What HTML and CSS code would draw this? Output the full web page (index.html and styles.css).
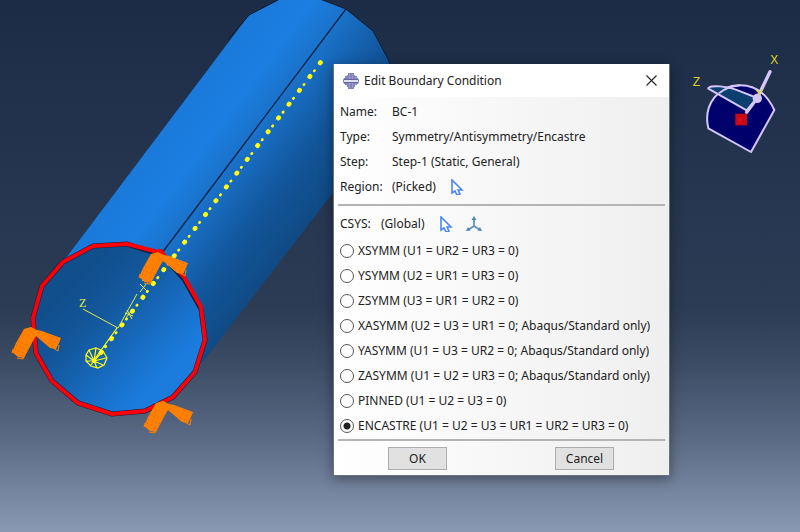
FILE: index.html
```html
<!DOCTYPE html>
<html lang="en">
<head>
    <title>Edit Boundary Condition</title>
    <meta charset="UTF-8">
    <meta name="viewport" content="width=device-width, initial-scale=1">
    <link rel="stylesheet" href="styles.css">
</head>
<body>
    <main class="viewport">
        <svg class="model" viewBox="0 0 800 532" preserveAspectRatio="xMinYMin slice" aria-hidden="true">
            <defs>
                <linearGradient id="side" gradientUnits="userSpaceOnUse" x1="63" y1="262" x2="202" y2="366">
                    <stop offset="0" stop-color="#1a7adb"/>
                    <stop offset=".25" stop-color="#1b7ee0"/>
                    <stop offset=".42" stop-color="#1a73cc"/>
                    <stop offset=".75" stop-color="#12559a"/>
                    <stop offset="1" stop-color="#104a84"/>
                </linearGradient>
                <linearGradient id="face" gradientUnits="userSpaceOnUse" x1="70" y1="285" x2="165" y2="375">
                    <stop offset="0" stop-color="#114e8c"/>
                    <stop offset=".3" stop-color="#13569a"/>
                    <stop offset=".8" stop-color="#1972cc"/>
                    <stop offset="1" stop-color="#1b7cde"/>
                </linearGradient>
                <!-- fixed support marker, one per constrained vertex -->
                <g id="support">
                    <path d="M151 254L158 252 164 255 169 256 188 263 186 268 183 274 177 273 163 261 160 266 151 283 145 282 139 277 143 268z" fill="#ff8000"/>
                    <path d="M143 270l12 5M142 274l11 5M145 266l11 5M180 261l-5 8M184 263l-5 9" fill="none" stroke="#b5652c" stroke-width="1" stroke-dasharray="1 3"/>
                    <path d="M139 278l1-4M144 283l6 1 2-5M180 273l5 3 1-6" fill="none" stroke="#ff8000" stroke-width="1"/>
                </g>
            </defs>

            <path d="M63 262L249 15 278 0 320-1 346 9 373 31 389 61 398 108 202 363 112 330z" fill="url(#side)"/>
            <path d="M228 40l21-25 29-15M320-1l26 10 27 22 16 30 9 47" fill="none" stroke="#0b1c30" stroke-width="1"/>
            <path d="M162 253L346 9" stroke="#0a2444" stroke-width="1.3"/>
            <path d="M93 246l34-2 35 11 22 24 17 30 4 31-10 32-22 25-28 14-33 3-34-11-26-22-16-28-3-35 9-32 21-24z" fill="url(#face)" stroke="#0b2342" stroke-width="5"/>
            <path d="M93 246l34-2 35 9 22 24 17 30 4 33-10 32-22 25-28 14-33 3-34-11-26-22-16-28-3-35 9-32 21-24z" fill="none" stroke="#fb0008" stroke-width="4" stroke-linejoin="round"/>
            <circle cx="160" cy="253" r="4" fill="#fb0008"/>

            <g fill="none" stroke="#ffff14" stroke-linecap="round">
                <path d="M320.500 62.500L100 354" stroke-width="4.600" stroke-dasharray=".6 16.700"/>
                <path d="M314.600 70.500L100 354" stroke-width="2.600" stroke-dasharray=".6 16.700"/>
                <path d="M117 328L94 360" stroke-width="1.200"/>
            </g>
            <g fill="none" stroke="#e2ec3e" stroke-width="1">
                <path d="M83 309l35 19 19-34"/>
                <path d="M127 310l5 9M132 310l-6 8M125 313l8 3" />
                <path d="M140 284l7 7M147 283l-7 9M142 280l6 2"/>
            </g>
            <g fill="none" stroke="#ffff14" stroke-width="1.200">
                <path d="M96 348l7 3 4 7-3 7-6 3-7-2-5-5v-6l3-5z"/>
                <path d="M94 361l2-13M94 361l9-10M94 361l12-3M94 361l9 4M94 361l3 7M94 361l-4 5M94 361l-8 0M94 361l-8-6M94 361l-5-11"/>
            </g>
            <circle cx="94" cy="361" r="2" fill="#ffff14"/>
            <text class="axis-label" x="79" y="307">Z</text>

            <use href="#support"/>
            <use href="#support" x="-127" y="75"/>
            <use href="#support" x="5" y="149"/>
        </svg>

        <svg class="triad" viewBox="0 0 390 390" aria-hidden="true">
            <path d="M115 265C98 192 148 135 210 136c47 0 82 28 103 74l-70 126z" fill="#00006c" stroke="#d6c6fa" stroke-width="6" stroke-linejoin="round"/>
            <path d="M230 211L115 146c0-14 62-7 96 8l51 20z" fill="#0b3f70" stroke="#d6c6fa" stroke-width="6" stroke-linejoin="round"/>
            <path d="M147 160c18-15 40-22 63-24" fill="none" stroke="#d6c6fa" stroke-width="6"/>
            <path d="M300 95l-38 79-32 43" fill="none" stroke="#d6c6fa" stroke-width="10" stroke-linecap="round"/>
            <circle cx="262" cy="175" r="14" fill="#d6c6fa"/>
            <path d="M258 150l10 9 9-11M268 159v8" fill="none" stroke="#e6d72c" stroke-width="4"/>
            <path d="M196 221h35v35h-35z" fill="#cc0812"/>
            <path d="M206 237l5 8 5-8z" fill="none" stroke="#f0202a" stroke-width="2"/>
            <text class="triad-label" x="301" y="73">X</text>
            <text class="triad-label" x="68" y="138">Z</text>
        </svg>

        <form class="dialog" role="dialog" aria-labelledby="dialog-title">
            <header class="titlebar">
                <svg class="app-icon" viewBox="0 0 16 16" aria-hidden="true">
                    <path d="M5 0h6v2h1v1h2v2h1l1 2v2l-1 2h-1v1h-2v2h-1v2H5v-2H4v-2H2v-1H1L0 9V7l1-2h1V3h2V2h1z" fill="#8384ba"/>
                    <path d="M6.500 1v5M9.500 1v5M12.500 4v2M6.500 10v5M9.500 10v5M12.500 10v2" stroke="#9c9ccc" stroke-width="1"/>
                    <path d="M1 6.500h14M1 9.500h14" stroke="#6263a0" stroke-width="1"/>
                    <path d="M1 8h14" stroke="#fff" stroke-width="1.500"/>
                </svg>
                <h1 class="title" id="dialog-title">Edit Boundary Condition</h1>
                <button class="close" type="button" aria-label="Close">
                    <svg viewBox="0 0 11 11" aria-hidden="true"><path d="M.5.5l10 10M10.500.5l-10 10" stroke="#222" stroke-width="1.100"/></svg>
                </button>
            </header>

            <div class="body">
                <div class="row"><span class="label">Name:</span><span>BC-1</span></div>
                <div class="row"><span class="label">Type:</span><span>Symmetry/Antisymmetry/Encastre</span></div>
                <div class="row"><span class="label">Step:</span><span>Step-1 (Static, General)</span></div>
                <div class="row">
                    <span class="label">Region:</span><span>(Picked)</span>
                    <button class="tool" type="button" aria-label="Edit region">
                        <svg viewBox="0 0 16 16" aria-hidden="true"><path d="M3 1v13l3-2 2 4 3-1-2-4h4z" fill="#fff" stroke="#4a86f7" stroke-width="1.600"/></svg>
                    </button>
                </div>
                <hr class="rule">
                <div class="row">
                    <span class="label label-csys">CSYS:</span><span>(Global)</span>
                    <button class="tool" type="button" aria-label="Edit CSYS">
                        <svg viewBox="0 0 16 16" aria-hidden="true"><path d="M3 1v13l3-2 2 4 3-1-2-4h4z" fill="#fff" stroke="#4a86f7" stroke-width="1.600"/></svg>
                    </button>
                    <button class="tool tool-csys" type="button" aria-label="Create datum CSYS">
                        <svg viewBox="0 0 16 16" aria-hidden="true"><path d="M8 2v8l-6 4M8 10l6 4" fill="none" stroke="#5b93bd" stroke-width="1.800"/><path d="M8 0l2.500 4h-5zM0 15l2-4 2.500 3.500zM16 15l-2-4-2.500 3.500z" fill="#4b87b4"/></svg>
                    </button>
                </div>
                <div class="options">
                    <label class="row option"><input type="radio" name="bc">XSYMM (U1 = UR2 = UR3 = 0)</label>
                    <label class="row option"><input type="radio" name="bc">YSYMM (U2 = UR1 = UR3 = 0)</label>
                    <label class="row option"><input type="radio" name="bc">ZSYMM (U3 = UR1 = UR2 = 0)</label>
                    <label class="row option"><input type="radio" name="bc">XASYMM (U2 = U3 = UR1 = 0; Abaqus/Standard only)</label>
                    <label class="row option"><input type="radio" name="bc">YASYMM (U1 = U3 = UR2 = 0; Abaqus/Standard only)</label>
                    <label class="row option"><input type="radio" name="bc">ZASYMM (U1 = U2 = UR3 = 0; Abaqus/Standard only)</label>
                    <label class="row option"><input type="radio" name="bc">PINNED (U1 = U2 = U3 = 0)</label>
                    <label class="row option"><input type="radio" name="bc" checked>ENCASTRE (U1 = U2 = U3 = UR1 = UR2 = UR3 = 0)</label>
                </div>
                <footer class="actions">
                    <button class="btn" type="button">OK</button>
                    <button class="btn" type="button">Cancel</button>
                </footer>
            </div>
        </form>
    </main>
</body>
</html>
```
FILE: styles.css
```css
* {
    box-sizing: border-box;
    margin: 0;
    padding: 0;
}
body {
    font-family: "Noto Sans", "Open Sans", sans-serif;
    font-size: 12px;
    color: #222;
}
.viewport {
    position: relative;
    min-height: 100vh;
    overflow: hidden;
    background: linear-gradient(#1c2b46 0%, #24344e 30%, #2d3c55 58%, #3c4b64 68%, #5a6983 82%, #8a99b3 100%);
}
.model {
    position: absolute;
    top: 0;
    left: 0;
    width: 100%;
    height: 100%;
}
.triad {
    position: absolute;
    top: 40px;
    right: 0;
    width: 130px;
    height: 130px;
}
.axis-label {
    font-family: "Liberation Serif", serif;
    font-size: 12px;
    fill: #e2ec3e;
}
.triad-label {
    font-family: "Liberation Sans", sans-serif;
    font-size: 36px;
    fill: #dcd21e;
}

/* dialog */
.dialog {
    position: absolute;
    top: 64px;
    left: 333px;
    width: 337px;
    border: 1px solid #6a7280;
    border-top: 0;
    background: linear-gradient(90deg, #fff, #efefef);
    box-shadow: 0 3px 12px rgba(0, 0, 0, 0.4);
}
.titlebar {
    display: flex;
    align-items: center;
    gap: 5px;
    height: 33px;
    padding: 0 12px 0 9px;
    background: #fff;
}
.app-icon {
    width: 16px;
    height: 16px;
}
.title {
    flex: 1;
    font-size: 12px;
    font-weight: 400;
}
.close,
.tool {
    display: flex;
    border: 0;
    background: none;
}
.close svg {
    width: 11px;
    height: 11px;
}
.body {
    padding: 2px 4px 5px;
}
.row {
    display: flex;
    align-items: center;
    height: 25px;
    padding: 0 2px;
    white-space: nowrap;
}
.label {
    width: 52px;
}
.label-csys {
    width: 41px;
}
.tool {
    margin-left: 13px;
}
.tool-csys {
    margin-left: 12px;
}
.tool svg {
    width: 16px;
    height: 16px;
}
.rule {
    height: 2px;
    margin: 5px 0;
    border: 0;
    background: #b4b4b4;
}
.options {
    padding: 2px 0 1px;
}
.option {
    gap: 4px;
}
.option input {
    appearance: none;
    flex: none;
    width: 14px;
    height: 14px;
    border: 1px solid #555;
    border-radius: 50%;
    background: #fff;
}
.option input:checked {
    background: radial-gradient(circle, #222 0 3px, #fff 4px);
}
.actions {
    display: flex;
    justify-content: space-between;
    padding: 6px 51px 0 50px;
    border-top: 2px solid #b4b4b4;
}
.btn {
    width: 59px;
    height: 23px;
    border: 1px solid #adadad;
    background: #e1e1e1;
    font: inherit;
    color: inherit;
}
```
